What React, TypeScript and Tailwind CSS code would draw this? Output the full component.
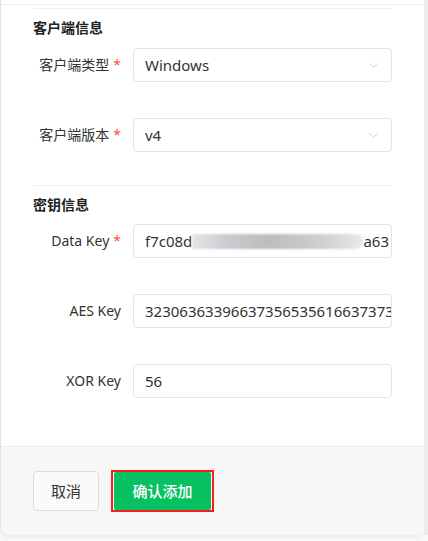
import React from 'react';
import { ChevronDown } from 'lucide-react';

const font = { fontFamily: '"Noto Sans", "Noto Sans CJK SC", sans-serif' };

const Label = ({ text, required }: { text: string; required?: boolean }) => (
  <div className="w-[88px] shrink-0 text-right text-[14px] text-[#333] leading-[20px] whitespace-nowrap">
    {text}
    {required && <span className="text-[#fa5151] ml-1">*</span>}
  </div>
);

const Field = ({ label, required, children }: { label: string; required?: boolean; children: React.ReactNode }) => (
  <div className="flex items-center gap-3 h-[34px]">
    <Label text={label} required={required} />
    {children}
  </div>
);

const Select = ({ value }: { value: string }) => (
  <div className="flex-1 h-[34px] border border-[#e5e5e5] rounded-[4px] bg-white flex items-center justify-between pl-[11px] pr-[10px]">
    <span className="text-[15px] text-[#333]">{value}</span>
    <ChevronDown size={15} strokeWidth={1.2} className="text-[#c4c4c4]" />
  </div>
);

const Input = ({ value }: { value: string }) => (
  <div className="min-w-0 flex-1 h-[34px] border border-[#e5e5e5] rounded-[4px] bg-white flex items-center pl-[11px] overflow-hidden">
    <span className="text-[15px] text-[#333] whitespace-nowrap">{value}</span>
  </div>
);

// Data Key: the middle of the key is pixelated in the screenshot
const MaskedInput = () => (
  <div className="min-w-0 flex-1 h-[34px] border border-[#e5e5e5] rounded-[4px] bg-white flex items-center pl-[11px] pr-[2px] overflow-hidden">
    <span className="text-[15px] text-[#333] whitespace-nowrap">f7c08d</span>
    <div className="flex-1 h-[15px] rounded-r-full bg-[linear-gradient(90deg,#e4e6ea_0%,#c9cbd0_20%,#bdbdbd_45%,#c5c7cb_65%,#d8d8d8_85%,#e9e9e9_100%)] blur-[1px]" />
    <span className="text-[15px] text-[#333] whitespace-nowrap">a63</span>
  </div>
);

const SectionTitle = ({ text }: { text: string }) => (
  <div className="mt-[9px] h-[20px] text-[14px] leading-[20px] font-bold text-[#222]">{text}</div>
);

export default function App() {
  return (
    <div className="w-[428px] h-[541px] bg-[#fafafa] flex" style={font}>
      <div className="w-[424px] h-[535px] flex flex-col bg-white border-l border-[#e3e3e3] rounded-b-[8px] shadow-[0_2px_6px_rgba(0,0,0,0.08)] overflow-hidden">
        <div className="h-[5px] border-b border-[#ececec] bg-white" />
        <div className="flex-1 pl-[32px] pr-[32px] pt-[3px]">
          <div className="h-px bg-[#eeeeee]" />
          <SectionTitle text="客户端信息" />
          <div className="mt-[10px] flex flex-col gap-[36px]">
            <Field label="客户端类型" required>
              <Select value="Windows" />
            </Field>
            <Field label="客户端版本" required>
              <Select value="v4" />
            </Field>
          </div>
          <div className="mt-[33px] h-px bg-[#eeeeee]" />
          <SectionTitle text="密钥信息" />
          <div className="mt-[9px] flex flex-col gap-[36px]">
            <Field label="Data Key" required>
              <MaskedInput />
            </Field>
            <Field label="AES Key">
              <Input value="32306363396637356535616637373733" />
            </Field>
            <Field label="XOR Key">
              <Input value="56" />
            </Field>
          </div>
        </div>
        <div className="h-[89px] shrink-0 bg-[#f7f7f7] border-t border-[#ececec] flex items-start gap-[12px] pl-[32px] pt-[24px]">
          <button className="w-[66px] h-[40px] border border-[#dcdcdc] rounded-[4px] bg-[#fafafa] text-[15px] text-[#333]">
            取消
          </button>
          <div className="border-2 border-[#ff1a1a] px-px -mt-px">
            <button className="w-[97px] h-[38px] bg-[#07c160] text-white text-[15px] font-medium rounded-[2px]">
              确认添加
            </button>
          </div>
        </div>
      </div>
      <div className="w-[4px] h-[535px] bg-[#ececec]" />
    </div>
  );
}
